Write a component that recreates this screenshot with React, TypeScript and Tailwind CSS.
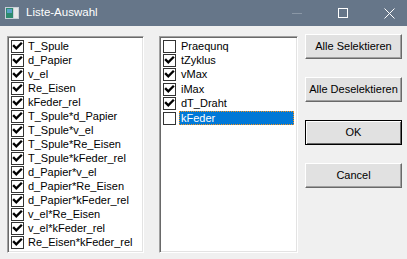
import React from "react";

const leftItems = [
  "T_Spule",
  "d_Papier",
  "v_el",
  "Re_Eisen",
  "kFeder_rel",
  "T_Spule*d_Papier",
  "T_Spule*v_el",
  "T_Spule*Re_Eisen",
  "T_Spule*kFeder_rel",
  "d_Papier*v_el",
  "d_Papier*Re_Eisen",
  "d_Papier*kFeder_rel",
  "v_el*Re_Eisen",
  "v_el*kFeder_rel",
  "Re_Eisen*kFeder_rel",
];

const rightItems: { label: string; checked: boolean; selected?: boolean }[] = [
  { label: "Praequnq", checked: false },
  { label: "tZyklus", checked: true },
  { label: "vMax", checked: true },
  { label: "iMax", checked: true },
  { label: "dT_Draht", checked: true },
  { label: "kFeder", checked: false, selected: true },
];

function Box({ checked }: { checked: boolean }) {
  return (
    <svg width="13" height="13" viewBox="0 0 13 13" className="shrink-0">
      <rect x="0.5" y="0.5" width="12" height="12" fill="#fff" stroke="#333" />
      {checked && (
        <path d="M3 6 L5.3 8.3 L10 3.6" fill="none" stroke="#000" strokeWidth="2.4" strokeLinecap="square" />
      )}
    </svg>
  );
}

function Btn({ label, def }: { label: string; def?: boolean }) {
  return (
    <div
      className={
        "h-[25px] w-[97px] flex items-center justify-center bg-[#e1e1e1] text-[11px] text-black " +
        (def
          ? "border border-black shadow-[inset_1px_1px_0_#fff,inset_-1px_-1px_0_#696969]"
          : "border border-t-white border-l-white border-r-[#696969] border-b-[#696969] shadow-[inset_-1px_-1px_0_#a0a0a0]")
      }
    >
      {label}
    </div>
  );
}

export default function App() {
  return (
    <div
      className="w-[407px] h-[259px] bg-[#f0f0f0] flex flex-col overflow-hidden"
      style={{ fontFamily: '"Liberation Sans", Arial, sans-serif' }}
    >
      <div className="h-[26px] bg-[#667689] flex items-center text-white shrink-0">
        <svg width="14" height="12" viewBox="0 0 14 12" className="ml-[5px]">
          <rect x="0" y="0" width="14" height="12" fill="#c8d0d8" />
          <rect x="1" y="1" width="7" height="10" fill="#2e8a6e" />
          <rect x="2" y="2" width="5" height="4" fill="#5aa0c8" />
          <rect x="9" y="1" width="4" height="10" fill="#e8e8e8" />
        </svg>
        <span className="ml-[7px] text-[11.5px] leading-none">Liste-Auswahl</span>
        <div className="ml-auto flex items-center h-full -mr-[5px]">
          <div className="w-[46px] h-full flex items-center justify-center">
            <div className="w-[10px] h-px bg-[#8a97a6]" />
          </div>
          <div className="w-[46px] h-full flex items-center justify-center">
            <div className="w-[10px] h-[10px] border border-white" />
          </div>
          <div className="w-[46px] h-full flex items-center justify-center">
            <svg width="11" height="11" viewBox="0 0 11 11">
              <path d="M0.5 0.5 L10.5 10.5 M10.5 0.5 L0.5 10.5" stroke="#fff" strokeWidth="1" />
            </svg>
          </div>
        </div>
      </div>
      <div className="flex items-start pl-[7px] pt-[10px]">
        <div className="w-[137px] h-[217px] bg-white border border-t-[#a0a0a0] border-l-[#a0a0a0] border-r-white border-b-white shadow-[inset_1px_1px_0_#696969,inset_-1px_-1px_0_#e3e3e3] pt-[2px] pl-[3px]">
          {leftItems.map((t) => (
            <div key={t} className="h-[14px] flex items-center text-[11px] text-black">
              <Box checked />
              <span className="ml-[4px] leading-none">{t}</span>
            </div>
          ))}
        </div>
        <div className="ml-[15px] w-[139px] h-[217px] bg-white border border-t-[#a0a0a0] border-l-[#a0a0a0] border-r-white border-b-white shadow-[inset_1px_1px_0_#696969,inset_-1px_-1px_0_#e3e3e3] pt-[2px] pl-[3px] pr-[3px]">
          {rightItems.map((it) => (
            <div key={it.label} className="h-[14.4px] flex items-center text-[11px] text-black">
              <Box checked={it.checked} />
              <span
                className={
                  "ml-[3px] leading-none h-[14px] flex items-center " +
                  (it.selected
                    ? "flex-1 bg-[#0078d7] text-white pl-[2px] outline outline-1 outline-dotted outline-[#f7941d] -outline-offset-1"
                    : "pl-[2px]")
                }
              >
                {it.label}
              </span>
            </div>
          ))}
        </div>
        <div className="ml-[7px] flex flex-col gap-[18px] -mt-[2px]">
          <Btn label="Alle Selektieren" />
          <Btn label="Alle Deselektieren" />
          <Btn label="OK" def />
          <Btn label="Cancel" />
        </div>
      </div>
    </div>
  );
}
